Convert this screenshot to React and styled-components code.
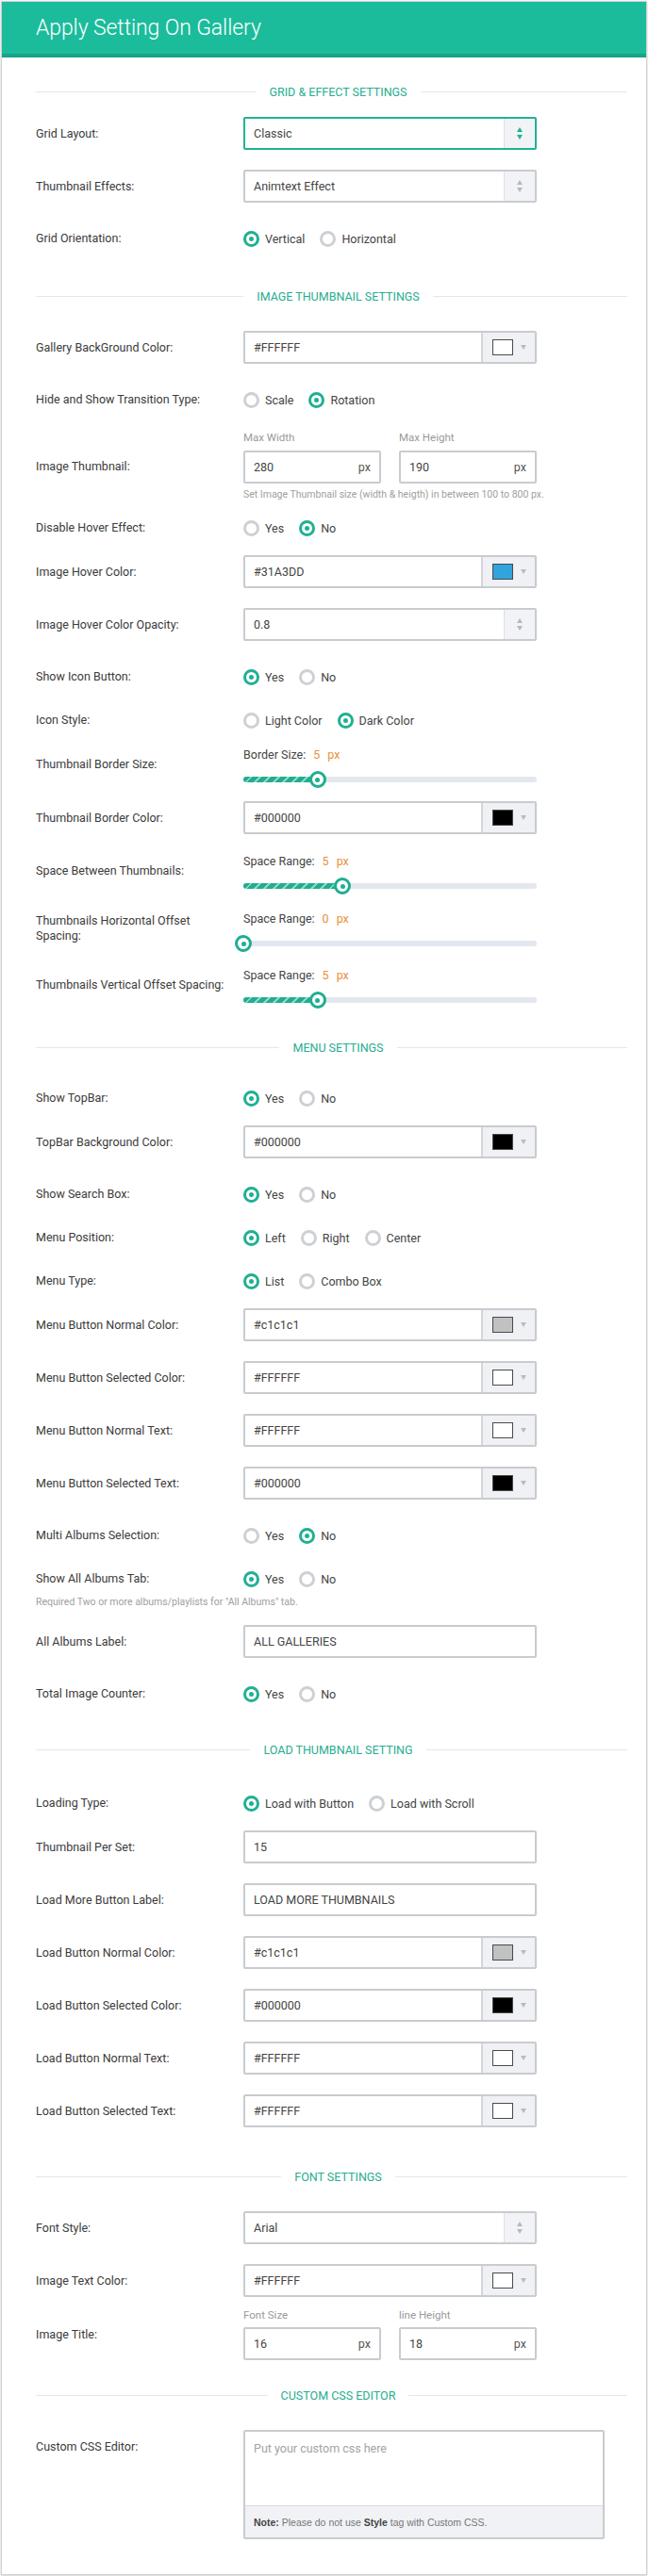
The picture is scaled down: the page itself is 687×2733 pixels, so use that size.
import React from 'react'
import styled, { createGlobalStyle } from 'styled-components'

const TEAL = '#1fae91'

const GlobalStyle = createGlobalStyle`
  body {
    margin: 0;
    background: #fff;
    font-family: Roboto, "Open Sans", Arial, sans-serif;
    color: #3d3d3d;
  }
`

const Page = styled.div`
  padding: 1px;
`
const Card = styled.div`
  background: #fff;
  border: 1px solid #cfd2d5;
  box-shadow: 0 1px 3px rgba(0, 0, 0, 0.2);
`
const Header = styled.div`
  height: 55px;
  background: #1bbc9b;
  border-bottom: 4px solid #17a487;
  display: flex;
  align-items: center;
  padding-left: 36px;
`
const Title = styled.h1`
  margin: 0;
  font-weight: 300;
  font-size: 23px;
  color: #fff;
  letter-spacing: -0.1px;
`
const Body = styled.div`
  display: flex;
  flex-direction: column;
  padding: 26px 6px 37px 36px;
`
const Section = styled.section`
  display: flex;
  flex-direction: column;
`
const SectionTitle = styled.div`
  display: grid;
  grid-template-columns: 1fr auto 1fr;
  align-items: center;
  height: 20px;
  margin: ${p => (p.$first ? '0 0 17px' : '20px 0 27px')};
`
const Line = styled.div`
  height: 1px;
  background: #e4e7ea;
  margin-right: ${p => (p.$right ? '14px' : '0')};
`
const SectionText = styled.span`
  margin: 0 14px;
  font-size: 12.5px;
  color: #27ad90;
  text-transform: uppercase;
`
const Row = styled.div`
  display: grid;
  grid-template-columns: 220px 1fr;
  align-items: ${p => (p.$top ? 'start' : 'center')};
  padding-top: ${p => p.$pt || 0}px;
  margin-bottom: ${p => (p.$mb === undefined ? 21 : p.$mb)}px;
`
const Label = styled.div`
  max-width: 208px;
  font-size: 12.5px;
  line-height: 16px;
  color: #3b3b3b;
  padding-bottom: ${p => p.$up || 0}px;
  padding-top: ${p => p.$down || 0}px;
`
const Box = styled.div`
  box-sizing: border-box;
  width: ${p => p.$w || 311}px;
  height: 35px;
  display: flex;
  align-items: center;
  background: #fff;
  border: 2px solid ${p => (p.$focus ? '#22b294' : '#c9cbce')};
  border-radius: 2px;
  overflow: hidden;
`
const BoxText = styled.span`
  flex: 1;
  padding-left: 9px;
  font-size: 12.5px;
  color: #444;
`
const Suffix = styled.span`
  padding-right: 9px;
  font-size: 12.5px;
  color: #555;
`
const Spinner = styled.div`
  width: 32px;
  height: 100%;
  background: #f1f3f7;
  border-left: 1px solid #dde0e5;
  display: flex;
  flex-direction: column;
  align-items: center;
  justify-content: center;
  gap: 3px;
`
const Arrow = styled.span`
  width: 0;
  height: 0;
  border-left: 3.5px solid transparent;
  border-right: 3.5px solid transparent;
  ${p => (p.$up ? 'border-bottom' : 'border-top')}: 5px solid ${p => p.$color};
`
const SwatchArea = styled.div`
  width: 55px;
  height: 100%;
  background: #eff1f5;
  border-left: 2px solid #d3d6da;
  display: flex;
  align-items: center;
  justify-content: center;
  gap: 8px;
`
const Swatch = styled.span`
  box-sizing: border-box;
  width: 22px;
  height: 17px;
  background: ${p => p.$color};
  border: 1px solid #4a4a4a;
`
const RadioGroup = styled.div`
  display: flex;
  align-items: center;
  height: 16px;
  gap: 16px;
`
const RadioItem = styled.label`
  display: flex;
  align-items: center;
  gap: 6px;
  font-size: 12.5px;
  color: #444;
`
const RadioCircle = styled.span`
  box-sizing: border-box;
  width: 17px;
  height: 17px;
  border-radius: 50%;
  border: 3px solid ${p => (p.$checked ? '#20b092' : '#cdd0d4')};
  display: flex;
  align-items: center;
  justify-content: center;
  &::after {
    content: '';
    display: ${p => (p.$checked ? 'block' : 'none')};
    width: 5px;
    height: 5px;
    border-radius: 50%;
    background: #20b092;
  }
`
const Dims = styled.div`
  display: flex;
  gap: 19px;
`
const DimField = styled.div`
  display: flex;
  flex-direction: column;
`
const SmallLabel = styled.div`
  font-size: 11.5px;
  line-height: 14px;
  color: #9a9a9a;
  margin-bottom: ${p => p.$mb}px;
`
const Hint = styled.div`
  grid-column: ${p => (p.$full ? '1 / -1' : 'auto')};
  font-size: 10.5px;
  line-height: 14px;
  color: #a0a0a0;
  margin-top: ${p => p.$mt}px;
`
const SliderHead = styled.div`
  height: 16px;
  line-height: 16px;
  font-size: 12.5px;
  color: #444;
`
const Orange = styled.span`
  color: #e8913d;
  margin-left: 8px;
`
const Track = styled.div`
  position: relative;
  width: 311px;
  height: 18px;
  margin-top: 9px;
`
const TrackBar = styled.div`
  position: absolute;
  left: 0;
  right: 0;
  top: 6px;
  height: 6px;
  border-radius: 3px;
  background: #e3e7ee;
`
const TrackFill = styled.div`
  position: absolute;
  left: 0;
  top: 6px;
  height: 6px;
  border-radius: 3px;
  background: repeating-linear-gradient(135deg, #22ad8f 0 5px, #8bd8c6 5px 7px);
`
const Thumb = styled.div`
  position: absolute;
  top: 0;
  box-sizing: border-box;
  width: 18px;
  height: 18px;
  margin-left: -9px;
  border-radius: 50%;
  background: #fff;
  border: 3px solid ${TEAL};
  display: flex;
  align-items: center;
  justify-content: center;
  &::after {
    content: '';
    width: 5px;
    height: 5px;
    border-radius: 50%;
    background: ${TEAL};
  }
`
const Editor = styled.div`
  box-sizing: border-box;
  width: 383px;
  border: 2px solid #c9cbce;
  border-radius: 2px;
`
const EditorArea = styled.textarea`
  display: block;
  box-sizing: border-box;
  width: 100%;
  height: 78px;
  border: none;
  resize: none;
  outline: none;
  padding: 10px 9px;
  font-family: Roboto, Arial, sans-serif;
  font-size: 12.5px;
  line-height: 16px;
  &::placeholder {
    color: #a3a3a3;
  }
`
const EditorNote = styled.div`
  height: 33px;
  display: flex;
  align-items: center;
  padding-left: 9px;
  background: #f0f2f6;
  border-top: 1px solid #d5d8dc;
  font-family: "Liberation Sans", Arial, sans-serif;
  font-size: 10.5px;
  color: #777;
  white-space: pre;
  b {
    color: #444;
  }
`

const sections = [
  {
    title: 'Grid & Effect Settings',
    rows: [
      { type: 'select', label: 'Grid Layout:', value: 'Classic', focus: true },
      { type: 'select', label: 'Thumbnail Effects:', value: 'Animtext Effect' },
      { type: 'radio', label: 'Grid Orientation:', options: ['Vertical', 'Horizontal'], on: 0, mb: 23 },
    ],
  },
  {
    title: 'Image Thumbnail Settings',
    rows: [
      { type: 'color', label: 'Gallery BackGround Color:', value: '#FFFFFF', swatch: '#ffffff' },
      { type: 'radio', label: 'Hide and Show Transition Type:', options: ['Scale', 'Rotation'], on: 1, mb: 25 },
      {
        type: 'dims', label: 'Image Thumbnail:', mb: 11, gap: 7,
        fields: [{ name: 'Max Width', value: '280' }, { name: 'Max Height', value: '190' }],
        hint: 'Set Image Thumbnail size (width & heigth) in between 100 to 800 px.',
      },
      { type: 'radio', label: 'Disable Hover Effect:', options: ['Yes', 'No'], on: 1 },
      { type: 'color', label: 'Image Hover Color:', value: '#31A3DD', swatch: '#31a3dd' },
      { type: 'select', label: 'Image Hover Color Opacity:', value: '0.8' },
      { type: 'radio', label: 'Show Icon Button:', options: ['Yes', 'No'], on: 0 },
      { type: 'radio', label: 'Icon Style:', options: ['Light Color', 'Dark Color'], on: 1 },
      { type: 'slider', label: 'Thumbnail Border Size:', caption: 'Border Size:', value: 5, pos: 0.254, mb: 14 },
      { type: 'color', label: 'Thumbnail Border Color:', value: '#000000', swatch: '#000000' },
      { type: 'slider', label: 'Space Between Thumbnails:', caption: 'Space Range:', value: 5, pos: 0.338, mb: 18 },
      { type: 'slider', label: 'Thumbnails Horizontal Offset Spacing:', caption: 'Space Range:', value: 0, pos: 0, mb: 17 },
      { type: 'slider', label: 'Thumbnails Vertical Offset Spacing:', caption: 'Space Range:', value: 5, pos: 0.254, mb: 11 },
    ],
  },
  {
    title: 'Menu Settings',
    rows: [
      { type: 'radio', label: 'Show TopBar:', options: ['Yes', 'No'], on: 0 },
      { type: 'color', label: 'TopBar Background Color:', value: '#000000', swatch: '#000000' },
      { type: 'radio', label: 'Show Search Box:', options: ['Yes', 'No'], on: 0 },
      { type: 'radio', label: 'Menu Position:', options: ['Left', 'Right', 'Center'], on: 0 },
      { type: 'radio', label: 'Menu Type:', options: ['List', 'Combo Box'], on: 0 },
      { type: 'color', label: 'Menu Button Normal Color:', value: '#c1c1c1', swatch: '#c1c1c1' },
      { type: 'color', label: 'Menu Button Selected Color:', value: '#FFFFFF', swatch: '#ffffff' },
      { type: 'color', label: 'Menu Button Normal Text:', value: '#FFFFFF', swatch: '#ffffff' },
      { type: 'color', label: 'Menu Button Selected Text:', value: '#000000', swatch: '#000000' },
      { type: 'radio', label: 'Multi Albums Selection:', options: ['Yes', 'No'], on: 1 },
      {
        type: 'radio', label: 'Show All Albums Tab:', options: ['Yes', 'No'], on: 0, mb: 17,
        hint: 'Required Two or more albums/playlists for "All Albums" tab.',
      },
      { type: 'text', label: 'All Albums Label:', value: 'ALL GALLERIES' },
      { type: 'radio', label: 'Total Image Counter:', options: ['Yes', 'No'], on: 0 },
    ],
  },
  {
    title: 'Load Thumbnail Setting',
    rows: [
      { type: 'radio', label: 'Loading Type:', options: ['Load with Button', 'Load with Scroll'], on: 0, pt: 12 },
      { type: 'text', label: 'Thumbnail Per Set:', value: '15' },
      { type: 'text', label: 'Load More Button Label:', value: 'LOAD MORE THUMBNAILS' },
      { type: 'color', label: 'Load Button Normal Color:', value: '#c1c1c1', swatch: '#c1c1c1' },
      { type: 'color', label: 'Load Button Selected Color:', value: '#000000', swatch: '#000000' },
      { type: 'color', label: 'Load Button Normal Text:', value: '#FFFFFF', swatch: '#ffffff' },
      { type: 'color', label: 'Load Button Selected Text:', value: '#FFFFFF', swatch: '#ffffff', mb: 22 },
    ],
  },
  {
    title: 'Font Settings',
    rows: [
      { type: 'select', label: 'Font Style:', value: 'Arial' },
      { type: 'color', label: 'Image Text Color:', value: '#FFFFFF', swatch: '#ffffff', mb: 12 },
      {
        type: 'dims', label: 'Image Title:', mb: 7, gap: 6,
        fields: [{ name: 'Font Size', value: '16' }, { name: 'line Height', value: '18' }],
      },
    ],
  },
  {
    title: 'Custom CSS Editor',
    rows: [{ type: 'editor', label: 'Custom CSS Editor:', mb: 0 }],
  },
]

const Radios = ({ options, on }) => (
  <RadioGroup>
    {options.map((opt, i) => (
      <RadioItem key={opt}>
        <RadioCircle $checked={i === on} />
        {opt}
      </RadioItem>
    ))}
  </RadioGroup>
)

const Control = ({ row }) => {
  switch (row.type) {
    case 'select': {
      const c = row.focus ? '#22b294' : '#b3b8c0'
      return (
        <Box $focus={row.focus}>
          <BoxText>{row.value}</BoxText>
          <Spinner>
            <Arrow $up $color={c} />
            <Arrow $color={c} />
          </Spinner>
        </Box>
      )
    }
    case 'color':
      return (
        <Box>
          <BoxText>{row.value}</BoxText>
          <SwatchArea>
            <Swatch $color={row.swatch} />
            <Arrow $color="#b6bbc3" />
          </SwatchArea>
        </Box>
      )
    case 'text':
      return (
        <Box>
          <BoxText>{row.value}</BoxText>
        </Box>
      )
    case 'radio':
      return <Radios options={row.options} on={row.on} />
    case 'dims':
      return (
        <div>
          <Dims>
            {row.fields.map(f => (
              <DimField key={f.name}>
                <SmallLabel $mb={row.gap}>{f.name}</SmallLabel>
                <Box $w={146}>
                  <BoxText>{f.value}</BoxText>
                  <Suffix>px</Suffix>
                </Box>
              </DimField>
            ))}
          </Dims>
          {row.hint && <Hint $mt={5}>{row.hint}</Hint>}
        </div>
      )
    case 'slider':
      return (
        <div>
          <SliderHead>
            {row.caption}
            <Orange>{row.value}</Orange>
            <Orange>px</Orange>
          </SliderHead>
          <Track>
            <TrackBar />
            {row.pos > 0 && <TrackFill style={{ width: `${row.pos * 311}px` }} />}
            <Thumb style={{ left: `${row.pos * 311}px` }} />
          </Track>
        </div>
      )
    case 'editor':
      return (
        <Editor>
          <EditorArea placeholder="Put your custom css here" />
          <EditorNote>
            <b>Note:</b> Please do not use <b>Style</b> tag with Custom CSS.
          </EditorNote>
        </Editor>
      )
    default:
      return null
  }
}

const SettingRow = ({ row }) => {
  const isRadio = row.type === 'radio'
  const isEditor = row.type === 'editor'
  return (
    <Row $pt={isRadio ? row.pt || 9 : 0} $mb={row.mb} $top={isEditor}>
      <Label $up={row.type === 'slider' ? 8 : 0} $down={isEditor ? 10 : 0}>{row.label}</Label>
      <Control row={row} />
      {isRadio && row.hint && <Hint $full $mt={10}>{row.hint}</Hint>}
    </Row>
  )
}

export default function App() {
  return (
    <Page>
      <GlobalStyle />
      <Card>
        <Header>
          <Title>Apply Setting On Gallery</Title>
        </Header>
        <Body>
          {sections.map((section, i) => (
            <Section key={section.title}>
              <SectionTitle $first={i === 0}>
                <Line />
                <SectionText>{section.title}</SectionText>
                <Line $right />
              </SectionTitle>
              {section.rows.map(row => (
                <SettingRow key={row.label} row={row} />
              ))}
            </Section>
          ))}
        </Body>
      </Card>
    </Page>
  )
}
